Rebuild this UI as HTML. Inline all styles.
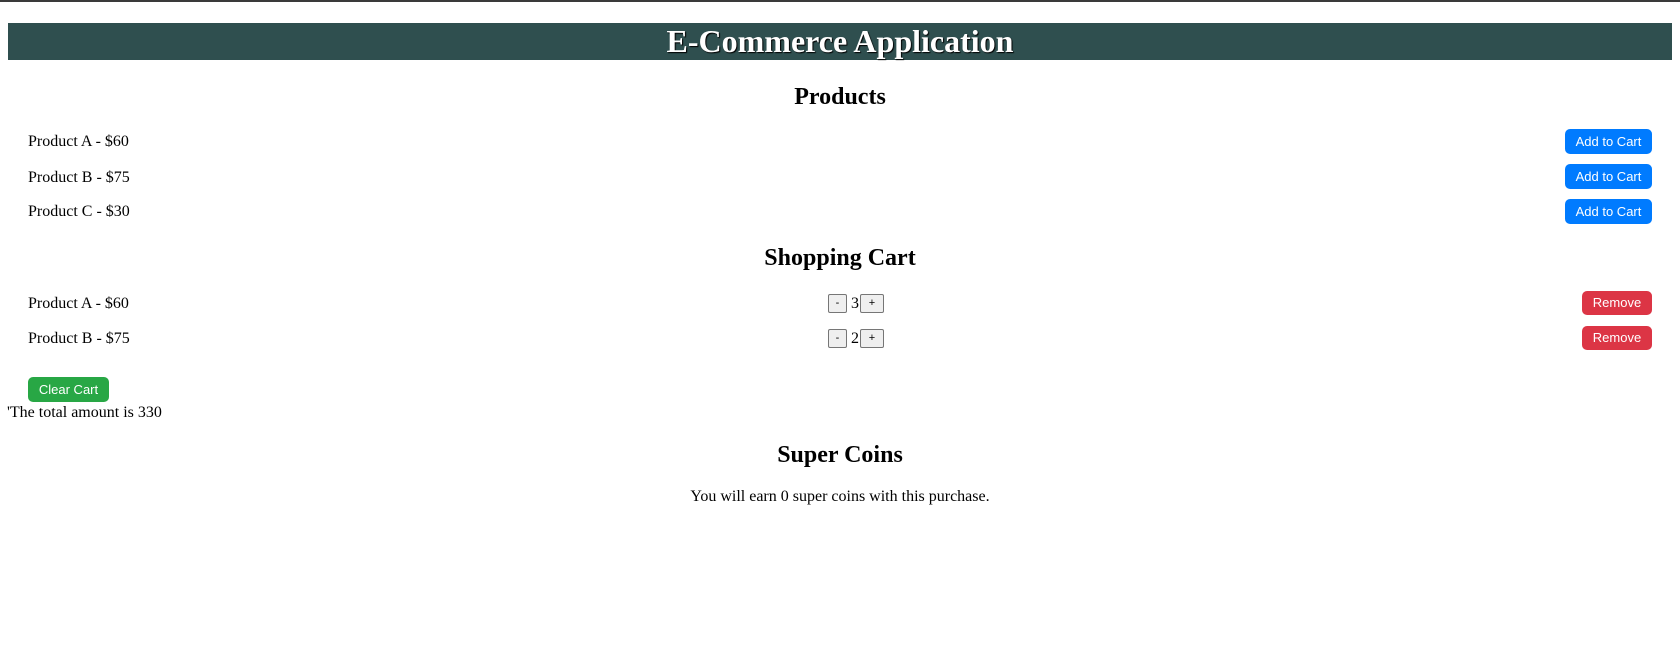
<!DOCTYPE html>
<html><head><style>
body{margin:0;width:1680px;height:670px;position:relative;background:#fff;font-family:"Liberation Serif",serif;color:#000;overflow:hidden}
.a{position:absolute;white-space:nowrap}
.t{font-size:16px;line-height:20px}
.h2{font-size:24px;font-weight:bold;left:0;width:1680px;text-align:center;line-height:30px}
.btn{position:absolute;border-radius:5px;color:#fff;font-family:"Liberation Sans",sans-serif;font-size:13px;text-align:center}
.sm{position:absolute;width:19px;height:19px;border:1px solid #767676;border-radius:2px;background:#efefef;box-sizing:border-box;font-family:"Liberation Sans",sans-serif;font-size:11px;text-align:center;line-height:17px}
</style></head><body>
<div class="a" style="left:0;top:0;width:1680px;height:2px;background:#3a3a3a"></div>
<div class="a" style="left:8px;top:23px;width:1664px;height:37px;background:#2f4f4f;color:#fff;font-weight:bold;font-size:32px;line-height:37px;text-align:center;text-shadow:1px 1px 1px #000">E-Commerce Application</div>
<div class="a h2" style="top:82px">Products</div>
<div class="a t" style="left:28px;top:132px">Product A - $60</div>
<div class="a t" style="left:28px;top:168px">Product B - $75</div>
<div class="a t" style="left:28px;top:202px">Product C - $30</div>
<div class="btn" style="left:1565px;top:129px;width:87px;height:25px;line-height:25px;background:#007bff">Add to Cart</div>
<div class="btn" style="left:1565px;top:164px;width:87px;height:25px;line-height:25px;background:#007bff">Add to Cart</div>
<div class="btn" style="left:1565px;top:199px;width:87px;height:25px;line-height:25px;background:#007bff">Add to Cart</div>
<div class="a h2" style="top:243px">Shopping Cart</div>
<div class="a t" style="left:28px;top:294px">Product A - $60</div>
<div class="a t" style="left:28px;top:329px">Product B - $75</div>
<div class="sm" style="left:828px;top:294px">-</div>
<div class="a t" style="left:851px;top:294px">3</div>
<div class="sm" style="left:860px;top:294px;width:24px">+</div>
<div class="sm" style="left:828px;top:329px">-</div>
<div class="a t" style="left:851px;top:329px">2</div>
<div class="sm" style="left:860px;top:329px;width:24px">+</div>
<div class="btn" style="left:1582px;top:291px;width:70px;height:24px;line-height:24px;background:#dc3545">Remove</div>
<div class="btn" style="left:1582px;top:326px;width:70px;height:24px;line-height:24px;background:#dc3545">Remove</div>
<div class="btn" style="left:28px;top:377px;width:81px;height:25px;line-height:25px;background:#28a745">Clear Cart</div>
<div class="a t" style="left:7px;top:403px">'The total amount is 330</div>
<div class="a h2" style="top:440px">Super Coins</div>
<div class="a t" style="left:0;width:1680px;text-align:center;top:487px">You will earn 0 super coins with this purchase.</div>
</body></html>
